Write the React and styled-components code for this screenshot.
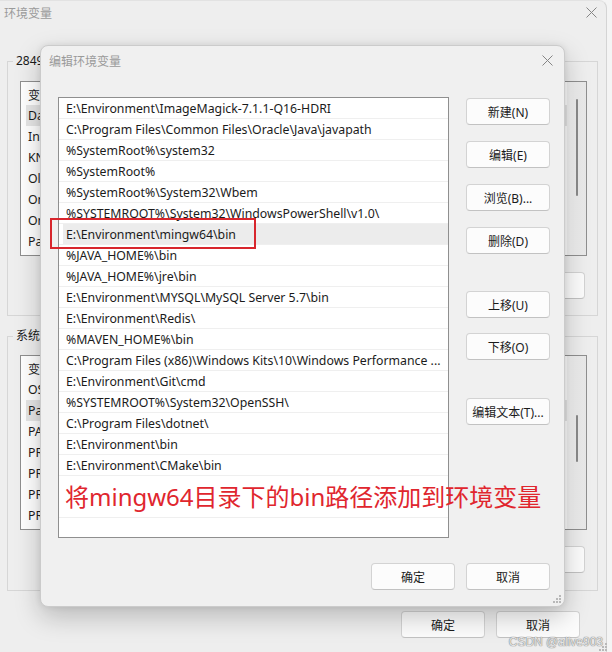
import styled, { createGlobalStyle } from "styled-components";

const GlobalStyle = createGlobalStyle`
  html, body {
    margin: 0;
    padding: 0;
  }
  body {
    width: 612px;
    height: 652px;
    overflow: hidden;
    background: #f4f4f4;
    font-family: "Noto Sans", "Noto Sans CJK SC", sans-serif;
    font-size: 12px;
    color: #1b1b1b;
  }
`;

const Desktop = styled.div`
  position: relative;
  width: 612px;
  height: 652px;
  overflow: hidden;
`;

const MainWindow = styled.div`
  width: 607px;
  height: 680px;
  box-sizing: border-box;
  background: #eeeeee;
  border-right: 1px solid #d4d4d4;
  border-top: 1px solid #e2e2e2;
  border-top-right-radius: 8px;
  display: flex;
  flex-direction: column;
`;

const TitleBar = styled.div`
  display: flex;
  align-items: center;
  justify-content: space-between;
  flex-shrink: 0;
  height: ${(p) => p.$h}px;
  padding: 0 ${(p) => p.$pr}px 0 ${(p) => p.$pl}px;
`;

const Title = styled.span`
  color: #9a9a9a;
  font-family: "Noto Sans CJK SC", sans-serif;
  font-size: 12px;
`;

const WindowBody = styled.div`
  display: flex;
  flex-direction: column;
  padding: 29px 8px 0 7px;
`;

const Group = styled.fieldset`
  margin: ${(p) => p.$mt}px 0 0 0;
  padding: ${(p) => p.$pt}px 10px ${(p) => p.$pb}px 12px;
  border: 1px solid #d6d6d6;
  min-width: 0;
  display: flex;
  flex-direction: column;
  gap: 16px;
`;

const Legend = styled.legend`
  padding: 0 3px;
  margin-left: -7px;
  line-height: 16px;
  font-size: 12px;
`;

const ListView = styled.div`
  height: 175px;
  box-sizing: border-box;
  border: 1px solid #8f8f8f;
  background: #ffffff;
  display: flex;
`;

const ListColumn = styled.div`
  flex: 1;
  padding: 1px 0 0 5px;
  overflow: hidden;
`;

const ListHeader = styled.div`
  height: 22px;
  line-height: 23px;
  padding-left: 2px;
  font-family: "Noto Sans CJK SC", sans-serif;
`;

const VarRow = styled.div`
  height: 21px;
  line-height: 22px;
  padding-left: 2px;
  font-size: 12.3px;
  white-space: nowrap;
  overflow: hidden;
  background: ${(p) => (p.$selected ? "#e6e6e6" : "transparent")};
`;

const ScrollTrack = styled.div`
  width: 19px;
  flex-shrink: 0;
  background: linear-gradient(to right, #f2f2f2, #e8e8e8);
  display: flex;
  flex-direction: column;
  align-items: center;
`;

const ScrollThumb = styled.div`
  width: 2px;
  margin-top: ${(p) => p.$top}px;
  height: ${(p) => p.$h}px;
  background: #8a8a8a;
  border-radius: 1px;
`;

const ButtonRow = styled.div`
  display: flex;
  justify-content: flex-end;
  gap: ${(p) => p.$gap || 10}px;
  padding-right: ${(p) => p.$pr || 0}px;
  margin-top: ${(p) => p.$mt || 0}px;
`;

const Button = styled.button`
  width: 84px;
  height: 27px;
  flex-shrink: 0;
  box-sizing: border-box;
  padding: 0;
  border: 1px solid #d3d3d3;
  border-bottom-color: #c2c2c2;
  border-radius: 4px;
  background: #fcfcfc;
  font-family: "Noto Sans", "Noto Sans CJK SC", sans-serif;
  font-size: 12px;
  color: #1b1b1b;
`;

const Dialog = styled.div`
  position: absolute;
  left: 40px;
  top: 45px;
  width: 525px;
  height: 562px;
  box-sizing: border-box;
  background: #f0f0f0;
  border: 1px solid #cbcbcb;
  border-radius: 8px;
  box-shadow: 0 10px 26px rgba(0, 0, 0, 0.22), 0 0 6px rgba(0, 0, 0, 0.08);
  display: flex;
  flex-direction: column;
`;

const DialogContent = styled.div`
  display: flex;
  gap: 17px;
  padding: 22px 14px 0 17px;
`;

const PathList = styled.div`
  width: 391px;
  height: 441px;
  flex-shrink: 0;
  box-sizing: border-box;
  border: 1px solid #8f8f8f;
  background: #ffffff;
  overflow: hidden;
`;

const PathRow = styled.div`
  height: ${(p) => p.$h || 21}px;
  box-sizing: border-box;
  line-height: 22px;
  padding-left: 7px;
  font-size: 12.3px;
  border-bottom: 1px solid #efefef;
  white-space: nowrap;
  overflow: hidden;
  background: ${(p) =>
    p.$selected ? "linear-gradient(to right, #ffffff 4px, #ececec 4px)" : "transparent"};
`;

const ButtonColumn = styled.div`
  display: flex;
  flex-direction: column;
  gap: 16px;
  padding-top: 1px;
`;

const Spacer = styled.div`
  height: ${(p) => p.$h}px;
  margin-bottom: ${(p) => p.$mb || 0}px;
`;

const HighlightBox = styled.div`
  position: absolute;
  left: 50px;
  top: 218px;
  width: 206px;
  height: 31px;
  box-sizing: border-box;
  border: 2px solid #d8262d;
`;

const Annotation = styled.div`
  position: absolute;
  left: 65px;
  top: 483px;
  font-family: "Noto Sans", "Noto Sans CJK SC", sans-serif;
  font-size: 24px;
  line-height: 28px;
  color: #e0262e;
  white-space: nowrap;
`;

const Watermark = styled.div`
  position: absolute;
  right: 9px;
  bottom: 3px;
  font-family: "Liberation Sans", sans-serif;
  font-size: 12px;
  color: #e4e4e4;
  text-shadow: 0 0 1px #7a7a7a, 0 0 1px #7a7a7a;
`;

const Grip = styled.svg`
  position: absolute;
  right: ${(p) => p.$r}px;
  bottom: ${(p) => p.$b}px;
`;

const CloseIcon = () => (
  <svg width="11" height="11" viewBox="0 0 11 11">
    <path d="M0.5 0.5 L10.5 10.5 M10.5 0.5 L0.5 10.5" stroke="#858585" strokeWidth="1" fill="none" />
  </svg>
);

const GripIcon = ({ r, b }) => (
  <Grip $r={r} $b={b} width="8" height="8" viewBox="0 0 8 8">
    <g fill="#b8b8b8">
      <rect x="6" y="0" width="2" height="2" />
      <rect x="6" y="3" width="2" height="2" />
      <rect x="3" y="3" width="2" height="2" />
      <rect x="6" y="6" width="2" height="2" />
      <rect x="3" y="6" width="2" height="2" />
      <rect x="0" y="6" width="2" height="2" />
    </g>
  </Grip>
);

const userVars = ["DataGrip", "IntelliJ IDEA", "KNIME_HOME", "OlderPath", "OneDrive", "OneDriveConsumer", "Path"];
const systemVars = [
  "OS",
  "Path",
  "PATHEXT",
  "PROCESSOR_ARCHITECTURE",
  "PROCESSOR_IDENTIFIER",
  "PROCESSOR_LEVEL",
  "PROCESSOR_REVISION",
];

const paths = [
  "E:\\Environment\\ImageMagick-7.1.1-Q16-HDRI",
  "C:\\Program Files\\Common Files\\Oracle\\Java\\javapath",
  "%SystemRoot%\\system32",
  "%SystemRoot%",
  "%SystemRoot%\\System32\\Wbem",
  "%SYSTEMROOT%\\System32\\WindowsPowerShell\\v1.0\\",
  "E:\\Environment\\mingw64\\bin",
  "%JAVA_HOME%\\bin",
  "%JAVA_HOME%\\jre\\bin",
  "E:\\Environment\\MYSQL\\MySQL Server 5.7\\bin",
  "E:\\Environment\\Redis\\",
  "%MAVEN_HOME%\\bin",
  "C:\\Program Files (x86)\\Windows Kits\\10\\Windows Performance ...",
  "E:\\Environment\\Git\\cmd",
  "%SYSTEMROOT%\\System32\\OpenSSH\\",
  "C:\\Program Files\\dotnet\\",
  "E:\\Environment\\bin",
  "E:\\Environment\\CMake\\bin",
];

const VarGroup = ({ legend, vars, selected, thumbTop, thumbH, mt, pt, pb }) => (
  <Group $mt={mt} $pt={pt} $pb={pb}>
    <Legend>{legend}</Legend>
    <ListView>
      <ListColumn>
        <ListHeader>变量</ListHeader>
        {vars.map((v, i) => (
          <VarRow key={v} $selected={i === selected}>
            {v}
          </VarRow>
        ))}
      </ListColumn>
      <ScrollTrack>
        <ScrollThumb $top={thumbTop} $h={thumbH} />
      </ScrollTrack>
    </ListView>
    <ButtonRow $pr={2}>
      <Button>新建(N)...</Button>
      <Button>编辑(E)...</Button>
      <Button>删除(D)</Button>
    </ButtonRow>
  </Group>
);

export default function App() {
  return (
    <Desktop>
      <GlobalStyle />
      <MainWindow>
        <TitleBar $h={23} $pl={4} $pr={9}>
          <Title>环境变量</Title>
          <CloseIcon />
        </TitleBar>
        <WindowBody>
          <VarGroup
            legend="2849的用户变量"
            vars={userVars}
            selected={0}
            thumbTop={17}
            thumbH={97}
            mt={0}
            pt={12}
            pb={16}
          />
          <VarGroup
            legend="系统变量"
            vars={systemVars}
            selected={1}
            thumbTop={59}
            thumbH={47}
            mt={12}
            pt={11}
            pb={17}
          />
          <ButtonRow $mt={20} $pr={18} $gap={11}>
            <Button>确定</Button>
            <Button>取消</Button>
          </ButtonRow>
        </WindowBody>
      </MainWindow>

      <Dialog>
        <TitleBar $h={29} $pl={8} $pr={11}>
          <Title>编辑环境变量</Title>
          <CloseIcon />
        </TitleBar>
        <DialogContent>
          <PathList>
            {paths.map((p, i) => (
              <PathRow key={p} $selected={i === 6}>
                {p}
              </PathRow>
            ))}
            <PathRow $h={42} />
          </PathList>
          <ButtonColumn>
            <Button>新建(N)</Button>
            <Button>编辑(E)</Button>
            <Button>浏览(B)...</Button>
            <Button>删除(D)</Button>
            <Spacer $h={5} />
            <Button>上移(U)</Button>
            <Spacer $h={0} $mb={-17} />
            <Button>下移(O)</Button>
            <Spacer $h={5} $mb={1} />
            <Button>编辑文本(T)...</Button>
          </ButtonColumn>
        </DialogContent>
        <ButtonRow $mt={25} $pr={14} $gap={11}>
          <Button>确定</Button>
          <Button>取消</Button>
        </ButtonRow>
        <GripIcon r={3} b={3} />
      </Dialog>

      <HighlightBox />
      <Annotation>将mingw64目录下的bin路径添加到环境变量</Annotation>
      <Watermark>CSDN @alive903</Watermark>
      <GripIcon r={5} b={1} />
    </Desktop>
  );
}
